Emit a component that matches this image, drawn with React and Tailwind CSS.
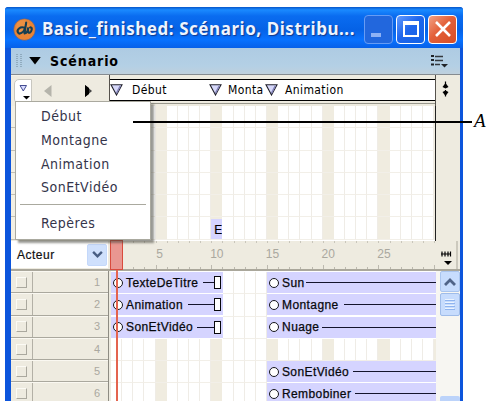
import React from 'react';

const FRAMES = Array.from({ length: 30 }, (_, i) => i + 1);

const channels = [
  { id: 1, first: 'TexteDeTitre', firstWidth: 'w-[75px]', second: 'Sun', secondWidth: 'w-[22px]' },
  { id: 2, first: 'Animation', firstWidth: 'w-[60px]', second: 'Montagne', secondWidth: 'w-[60px]' },
  { id: 3, first: 'SonEtVidéo', firstWidth: 'w-[69px]', second: 'Nuage', secondWidth: 'w-[38px]' },
  { id: 4 },
  { id: 5, second: 'SonEtVidéo', secondWidth: 'w-[69px]' },
  { id: 6, second: 'Rembobiner', secondWidth: 'w-[71px]' },
];

const menuItems = ['Début', 'Montagne', 'Animation', 'SonEtVidéo'];

const Cells = ({ from, to, sprite }) =>
  FRAMES.slice(from - 1, to).map((frame) => (
    <div
      key={frame}
      className={`w-[11.15px] shrink-0 border-b border-b-[#f2efe8] ${
        frame % 5 === 0 ? 'bg-[#f0ece0]' : 'border-r border-r-[#efece6] bg-white'
      }`}
    >
      {sprite === frame && (
        <div className="mt-[2px] flex h-[20px] items-center bg-[#d5d4ff] pt-px pl-[3px] text-[12px] text-black [-webkit-text-stroke:0.2px_#000]">
          E
        </div>
      )}
    </div>
  ));

const Sprite = ({ label, labelWidth, closed }) => (
  <div
    className={`flex h-[21px] items-center self-start bg-[#d5d4ff] pl-[2px] ${
      closed ? 'w-[111.5px] pr-[2px]' : 'w-[169px]'
    } shrink-0`}
  >
    <div className="h-[10px] w-[10px] shrink-0 rounded-full border border-[#16161c] bg-white" />
    <span
      className={`ml-[3px] shrink-0 whitespace-nowrap text-[12px] leading-none tracking-[0.4px] text-[#08080c] [-webkit-text-stroke:0.25px_#08080c] ${labelWidth}`}
    >
      {label}
    </span>
    <div className="ml-[2px] grow border-t border-[#14142c]" />
    {closed && <div className="h-[13px] w-[7px] shrink-0 border-[1.5px] border-[#08080c] bg-white" />}
  </div>
);

const Marker = ({ label, textClassName = 'ml-[7px]', className }) => (
  <div className={`flex items-center whitespace-nowrap ${className}`}>
    <svg width="13" height="12" viewBox="0 0 13 12" className="shrink-0">
      <path d="M1 .8H12L6.5 11Z" fill="#d6d8fa" stroke="#20202c" strokeWidth="1.1" />
      <path d="M10.2 2L6.5 9.2" stroke="#8383ba" strokeWidth="1.5" />
    </svg>
    <span
      className={`font-['DejaVu_Sans_Condensed','DejaVu_Sans',sans-serif] text-[12px] tracking-[0.4px] text-black ${textClassName}`}
    >
      {label}
    </span>
  </div>
);

const TitleBar = () => (
  <div className="flex h-[41px] shrink-0 items-center rounded-t-[3px] bg-[linear-gradient(#0756c9_0%,#1a8aff_7%,#0a6cf0_22%,#0562e6_55%,#0872ff_80%,#0760e8_100%)] pt-[3px] pl-[8px]">
    <svg width="23" height="23" viewBox="0 0 23 23" className="shrink-0">
      <circle cx="11.5" cy="11.5" r="10.8" fill="#e88435" stroke="#4b5f91" strokeWidth=".6" />
      <circle cx="10" cy="9" r="7" fill="#f19c50" opacity=".5" />
      <path
        d="M13.2 4.5L11.5 15.5M11.8 9.8C7 8 3.5 12 5 14.5C6.5 17 10.5 14.5 12 10.5M11.6 14.8C14 16 15 12 15.2 9.5C14.2 15 16.2 16 18 13.5C19.5 11 18.8 9 17.2 9.5"
        fill="none"
        stroke="#173e50"
        strokeWidth="2.1"
        strokeLinecap="round"
      />
    </svg>
    <div className="ml-[6px] w-[319px] whitespace-nowrap font-['Noto_Sans','Open_Sans',sans-serif] text-[17px] font-bold tracking-[0.55px] text-[#eef4ff] [text-shadow:1px_1px_1px_#12388c]">
      Basic_finished: Scénario, Distribu...
    </div>
    <div className="ml-[3px] flex gap-[3px]">
      <div className="flex h-[29px] w-[29px] items-end rounded-[4px] border border-[#679cf4] bg-[#2267dd] pb-[6px] pl-[6px]">
        <div className="h-[4px] w-[10px] bg-[#8eb2f5]" />
      </div>
      <div className="flex h-[29px] w-[29px] items-center justify-center rounded-[4px] border border-white bg-[linear-gradient(135deg,#629bff,#1f66ec_45%,#1262e5)]">
        <div className="h-[16px] w-[16px] border-2 border-t-4 border-white" />
      </div>
      <div className="flex h-[29px] w-[29px] items-center justify-center rounded-[4px] border border-white bg-[linear-gradient(135deg,#f2a184,#e36039_45%,#d64d25)]">
        <svg width="18" height="18" viewBox="0 0 18 18">
          <path d="M2 2L16 16M16 2L2 16" stroke="white" strokeWidth="2.6" />
        </svg>
      </div>
    </div>
  </div>
);

const PanelHeader = () => (
  <div className="flex h-[27px] shrink-0 items-center border-b border-[#858b90] bg-[linear-gradient(#aecbe3,#b4d0e5_70%,#bfd0dd)] pl-[5px]">
    <svg width="6" height="14" viewBox="0 0 6 14">
      <path d="M1 0V14M5 0V14" stroke="#6f8798" strokeWidth="1" strokeDasharray="1 1" />
    </svg>
    <svg width="12" height="8" viewBox="0 0 13 9" className="ml-[7px]">
      <path d="M0 0H13L6.5 8.5Z" fill="#000" />
    </svg>
    <span className="ml-[9px] pt-[1px] font-['DejaVu_Sans_Condensed','DejaVu_Sans',sans-serif] text-[14px] font-bold tracking-[0.9px] text-black">
      Scénario
    </span>
    <svg width="17" height="14" viewBox="0 0 17 14" className="mr-[12px] ml-auto">
      <path d="M0 2H3M0 6H3M0 10.5H3" stroke="#202428" strokeWidth="2" />
      <path d="M4 2.5H12M4 6.5H12M4 10.5H9" stroke="#34393e" strokeWidth="1.4" />
      <path d="M10 10H17L13.5 13.5Z" fill="#202428" />
    </svg>
  </div>
);

const MarkerBar = () => (
  <div className="flex h-[31px] shrink-0">
    <div className="flex w-[98px] shrink-0 items-center border-t border-[#f5f2e8]">
      <div className="ml-[3px] h-[25px] w-[18px] rounded-l-[5px] border border-[#c8c7c0] bg-white">
        <svg width="16" height="24" viewBox="0 0 16 24">
          <path d="M5 5.5H11.5L8.3 11Z" fill="#d8dbff" stroke="#444c91" strokeWidth="1" />
          <path d="M8 16H15L11.5 19.5Z" fill="#000" />
        </svg>
      </div>
      <svg width="8" height="12" viewBox="0 0 8 12" className="ml-[12px]">
        <path d="M7.5 0V12L0 6Z" fill="#b5b4ab" />
      </svg>
      <svg width="9" height="12" viewBox="0 0 9 12" className="ml-[32px]">
        <path d="M1 0L8 6L1 12Z" fill="#444" />
        <path d="M1 0L5 3V9L1 12Z" fill="#000" />
      </svg>
    </div>
    <div className="w-[327px] shrink-0 border-r border-l border-[#55524c] pt-[4px]">
      <div className="flex h-[22px] w-[325px] items-center border-t border-b border-black bg-white">
        <Marker label="Début" className="w-[99px] shrink-0" textClassName="ml-[9px]" />
        <Marker label="Monta" className="w-[57px] shrink-0" textClassName="ml-[6px]" />
        <Marker label="Animation" className="-ml-px grow" />
      </div>
      <div className="mt-[2px] h-px bg-[#99988d]" />
    </div>
    <svg width="24" height="31" viewBox="0 0 24 31">
      <path d="M9.5 6.5V12M9.5 15V21.5" stroke="#000" strokeWidth="1.2" />
      <path d="M6.5 12L9.5 8L12.5 12L9.5 13.5ZM6.5 17L9.5 15.5L12.5 17L9.5 21Z" fill="#000" />
    </svg>
  </div>
);

const EffectChannels = () => (
  <div className="flex h-[135px] shrink-0">
    <div className="w-[100px] shrink-0">
      {[0, 1, 2, 3, 4, 5].map((row) => (
        <div key={row} className="h-[22.3px] border-b border-[#c2bfb4] bg-[#f2efe4]" />
      ))}
    </div>
    <div className="w-[325px] shrink-0 overflow-hidden border-r border-[#222] bg-white">
      {[0, 1, 2, 3, 4, 5].map((row) => (
        <div key={row} className="flex h-[22.3px]">
          <Cells from={1} to={30} sprite={row === 5 ? 10 : null} />
        </div>
      ))}
    </div>
  </div>
);

const Ruler = () => (
  <div className="flex h-[30px] shrink-0 border-b-2 border-[#aaa79b]">
    <div className="flex h-[27px] w-[97px] shrink-0 items-center bg-white pl-[6px]">
      <span className="text-[12px] tracking-[0.5px] text-[#111] [-webkit-text-stroke:0.2px_#111]">Acteur</span>
      <div className="mr-[1px] ml-auto flex h-[22px] w-[20px] items-center justify-center rounded-[2px] border border-[#c4d8fa] bg-[#cfe0fc]">
        <svg width="11" height="7" viewBox="0 0 12 8">
          <path d="M1 1L6 6L11 1" fill="none" stroke="#485d82" strokeWidth="2.8" />
        </svg>
      </div>
    </div>
    <div className="ml-[3px] flex w-[325px] shrink-0 overflow-hidden">
      {FRAMES.map((frame) => (
        <div key={frame} className="flex w-[11.15px] shrink-0 flex-col items-center justify-between">
          <div className="h-[2px] w-px self-start bg-[#c9c6bb]" />
          <span
            className={`w-[24px] text-center text-[12px] leading-none text-[#aaa89f] ${frame < 10 ? 'pr-[3px]' : ''}`}
          >
            {frame % 5 === 0 && frame < 30 ? frame : ''}
          </span>
          <div className={`w-px self-start bg-[#bcb9af] ${frame % 5 === 0 ? 'h-[4px]' : 'h-[2px]'}`} />
        </div>
      ))}
    </div>
    <svg width="22" height="28" viewBox="0 0 22 28">
      <path d="M6 10.5V15.5M9 10.5V15.5M12 10.5V15.5M14.5 10.5V15.5M5 13H15" stroke="#000" strokeWidth="1.2" />
      <path d="M8 20H16L12 24Z" fill="#000" />
      <path d="M21 0V28" stroke="#aaa79b" />
    </svg>
  </div>
);

const ScoreChannels = () => (
  <div className="flex h-[130px] shrink-0">
    <div className="w-[97px] shrink-0 bg-[#eeebe0]">
      {channels.map(({ id }) => (
        <div key={id} className="flex h-[22.3px] border-t border-b border-t-[#faf8f1] border-b-[#aaa89e]">
          <div className="flex w-[22px] shrink-0 items-center justify-center border-r border-[#b3b0a6]">
            <div className="h-[11px] w-[11px] border border-t-[#fcfbf5] border-r-[#aaa89e] border-b-[#aaa89e] border-l-[#fcfbf5]" />
          </div>
          <span className="mr-[8px] ml-auto self-center text-[11px] leading-none text-[#aaa89f]">{id}</span>
        </div>
      ))}
    </div>
    <div className="w-[3px] shrink-0 border-l border-[#8e8c83] bg-[#eeebe0]" />
    <div className="w-[325px] shrink-0 overflow-hidden bg-white pt-px">
      {channels.map((channel) => (
        <div key={channel.id} className="flex h-[22.3px]">
          {channel.first ? (
            <Sprite label={channel.first} labelWidth={channel.firstWidth} closed />
          ) : (
            <Cells from={1} to={10} />
          )}
          <Cells from={11} to={14} />
          {channel.second ? (
            <Sprite label={channel.second} labelWidth={channel.secondWidth} />
          ) : (
            <Cells from={15} to={30} />
          )}
        </div>
      ))}
    </div>
    <div className="flex w-[24px] shrink-0 flex-col items-center bg-[#f7f6f2] pl-[3px]">
      <div className="flex h-[21px] w-[20px] items-center justify-center rounded-[2px] border border-[#aac5ee] bg-[#c7dcfd]">
        <svg width="12" height="8" viewBox="0 0 12 8">
          <path d="M1 7L6 2L11 7" fill="none" stroke="#506488" strokeWidth="2.8" />
        </svg>
      </div>
      <div className="mt-[1px] flex h-[23px] w-[20px] items-center justify-center rounded-[2px] border border-[#9fbce9] bg-[#c7dcfd]">
        <svg width="10" height="11" viewBox="0 0 10 11">
          <path d="M0 1.5H10M0 4.5H10M0 7.5H10M0 10.5H10" stroke="#8fb4ef" />
          <path d="M0 .5H9M0 3.5H9M0 6.5H9M0 9.5H9" stroke="#eaf3ff" />
        </svg>
      </div>
      <div className="mt-auto h-[5px] w-[20px] rounded-t-[2px] bg-[#bcd3fa]" />
    </div>
  </div>
);

const MarkerMenu = () => (
  <div className="absolute top-[101px] left-[15px] h-[139px] w-[136px] border border-[#aaa99f] bg-white pt-[3px] font-['DejaVu_Sans_Condensed','DejaVu_Sans',sans-serif] text-[14px] tracking-[0.5px] text-[#34344a] shadow-[3px_3px_2px_rgba(70,70,60,0.55)]">
    {menuItems.map((item) => (
      <div key={item} className="flex h-[23.7px] items-center pl-[25px]">
        {item}
      </div>
    ))}
    <div className="mx-[4px] mt-[4px] border-t border-[#aaa99f]" />
    <div className="mt-[7px] flex h-[24px] items-center pl-[25px]">Repères</div>
  </div>
);

const App = () => {
  return (
    <div className="relative h-[401px] w-[489px] overflow-hidden bg-white pt-[7px] pl-[5px] font-['Liberation_Sans',Arial,sans-serif]">
      <div className="flex h-[394px] w-[458px] flex-col overflow-hidden rounded-t-[3px] bg-[#0c55dc]">
        <TitleBar />
        <div className="ml-[6px] flex w-[449px] flex-col bg-[#eeebe0]">
          <PanelHeader />
          <MarkerBar />
          <EffectChannels />
          <Ruler />
          <ScoreChannels />
        </div>
      </div>

      {/* playhead */}
      <div className="absolute top-[240px] left-[110px] h-[30px] w-[13px] border border-[#d94b3d] bg-[#e99791]" />
      <div className="absolute top-[270px] left-[116px] h-[131px] w-[2px] bg-[#e4644f]" />

      <MarkerMenu />

      {/* callout */}
      <div className="absolute top-[121px] left-[133px] h-[2px] w-[339px] bg-black" />
      <span className="absolute top-[110px] left-[474px] font-['Liberation_Serif',serif] text-[19px] leading-[22px] text-black italic">
        A
      </span>
    </div>
  );
};

export default App;
